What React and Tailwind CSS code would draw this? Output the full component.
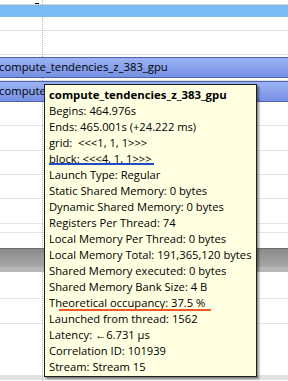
const rows = [
  'Begins: 464.976s',
  'Ends: 465.001s (+24.222 ms)',
  'grid:  <<<1, 1, 1>>>',
  'block: <<<4, 1, 1>>>',
  'Launch Type: Regular',
  'Static Shared Memory: 0 bytes',
  'Dynamic Shared Memory: 0 bytes',
  'Registers Per Thread: 74',
  'Local Memory Per Thread: 0 bytes',
  'Local Memory Total: 191,365,120 bytes',
  'Shared Memory executed: 0 bytes',
  'Shared Memory Bank Size: 4 B',
  'Theoretical occupancy: 37.5 %',
  'Launched from thread: 1562',
  'Latency: \u21906.731 \u00b5s',
  'Correlation ID: 101939',
  'Stream: Stream 15',
];

const Line = () => <div className="h-px bg-[#e4e4e4]" />;

const KernelBar = ({ label }) => (
  <div className="relative h-[21px] border-y border-[#4d62b0] bg-gradient-to-b from-[#9cb3f2] to-[#7690e4] flex items-center whitespace-nowrap text-[11.3px] text-black -ml-px">
    {label}
  </div>
);

const Tooltip = () => (
  <div className="absolute left-[44px] top-[84px] w-[213px] border border-[#1e1e1e] bg-[#ffffe1] pt-[2px] pb-px shadow-[2px_2px_2px_rgba(0,0,0,0.45)] text-[11.2px] text-black">
    <div className="h-4 leading-4 pl-1 font-bold text-[11.4px] whitespace-nowrap">compute_tendencies_z_383_gpu</div>
    {rows.map((r) => (
      <div key={r} className="h-4 leading-4 pl-1 whitespace-pre">
        <span className="relative">
          {r}
          {r.startsWith('block') && (
            <span className="absolute left-0 -right-[2px] top-[12px] h-[2px] bg-[#2148c6]" />
          )}
          {r.startsWith('Theoretical') && (
            <span className="absolute left-[10px] -right-[6px] top-[14px] h-[2px] bg-[#ef5a24]" />
          )}
        </span>
      </div>
    ))}
  </div>
);

export default function App() {
  return (
    <div className="relative w-[288px] h-[381px] overflow-hidden bg-white font-['Open_Sans',sans-serif]">
      {/* cursor guide */}
      <div className="absolute left-[42px] top-0 h-full border-l border-dotted border-[#b5b5b5]" />

      <div className="h-[4px] pl-[35px] flex items-end">
        <div className="w-[4px] h-px bg-black" />
      </div>
      <div className="h-px bg-[#d6d6d6]" />
      <div className="relative h-[12px] bg-[#78bcf3]" />
      <div className="h-[13px]" />
      <Line />
      <div className="h-[23px]" />
      <Line />
      <div className="h-[2px]" />
      <KernelBar label="compute_tendencies_z_383_gpu" />
      <div className="h-[3px] border-b border-[#e0e0e0]" />
      <KernelBar label="compute_" />
      <div className="h-[23px]" />
      <Line />
      <div className="h-[24px]" />
      <Line />
      <div className="h-[23px]" />
      <Line />
      <div className="h-[23px]" />
      <Line />
      <div className="h-[24px]" />
      <Line />
      <div className="h-[8px]" />
      <Line />
      <div className="h-[15px]" />
      <div className="relative h-[19px] border-t border-[#6e6e6e] bg-gradient-to-b from-[#8a8a8a] via-[#9a9a9a] to-[#a6a6a6]" />
      <div className="relative h-[5px] bg-[#b7b7b7]" />
      <div className="h-[26px]" />
      <Line />
      <div className="h-[24px]" />
      <Line />
      <div className="h-[51px]" />
      <div className="h-[5px] bg-[#e2e2e2]" />

      <Tooltip />
    </div>
  );
}
